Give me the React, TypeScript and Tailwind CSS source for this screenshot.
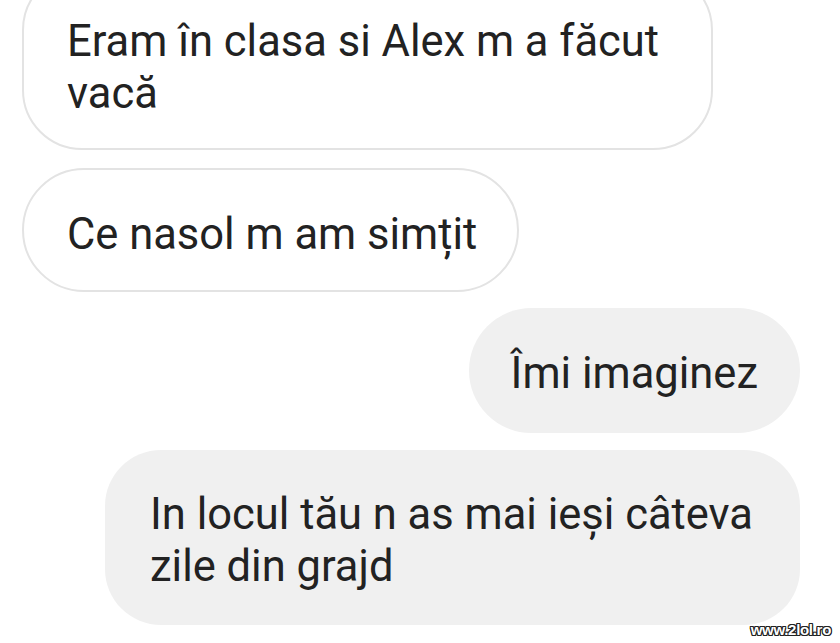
import React from 'react';

const font = { fontFamily: 'Roboto, "Noto Sans", sans-serif' };

export default function App() {
  return (
    <div className="relative w-[840px] h-[643px] overflow-hidden bg-white text-[#222] text-[43.5px] leading-[52px]" style={font}>
      <div className="flex flex-col">
        <div className="ml-[22px] mt-[-30px] w-[691px] rounded-[60px] border-2 border-[#e3e3e3] pl-[43px] pt-[44px] pb-[28px] whitespace-nowrap">
          Eram în clasa si Alex m a făcut
          <br />
          vacă
        </div>

        <div className="ml-[22px] mt-[18px] w-fit rounded-full border-2 border-[#e3e3e3] pl-[43px] pr-[40px] pt-[39px] pb-[29px] whitespace-nowrap">
          Ce nasol m am simțit
        </div>

        <div className="self-end mr-[40px] mt-[16px] w-fit rounded-full bg-[#f0f0f0] pl-[42px] pr-[42px] pt-[40px] pb-[33px] whitespace-nowrap">
          Îmi imaginez
        </div>

        <div className="self-end mr-[40px] mt-[17px] w-[695px] rounded-[56px] bg-[#f0f0f0] pl-[45px] pt-[39px] pb-[32px] whitespace-nowrap">
          In locul tău n as mai ieși câteva
          <br />
          zile din grajd
        </div>
      </div>

      <div
        className="absolute right-[9px] bottom-[6px] text-[15px] leading-none font-bold text-white tracking-[-0.3px]"
        style={{ fontFamily: '"Liberation Sans", Arial, sans-serif', textShadow: '1px 0 #222, -1px 0 #222, 0 1px #222, 0 -1px #222, 1px 1px #222, -1px -1px #222, 1px -1px #222, -1px 1px #222' }}
      >
        www.2lol.ro
      </div>
    </div>
  );
}
